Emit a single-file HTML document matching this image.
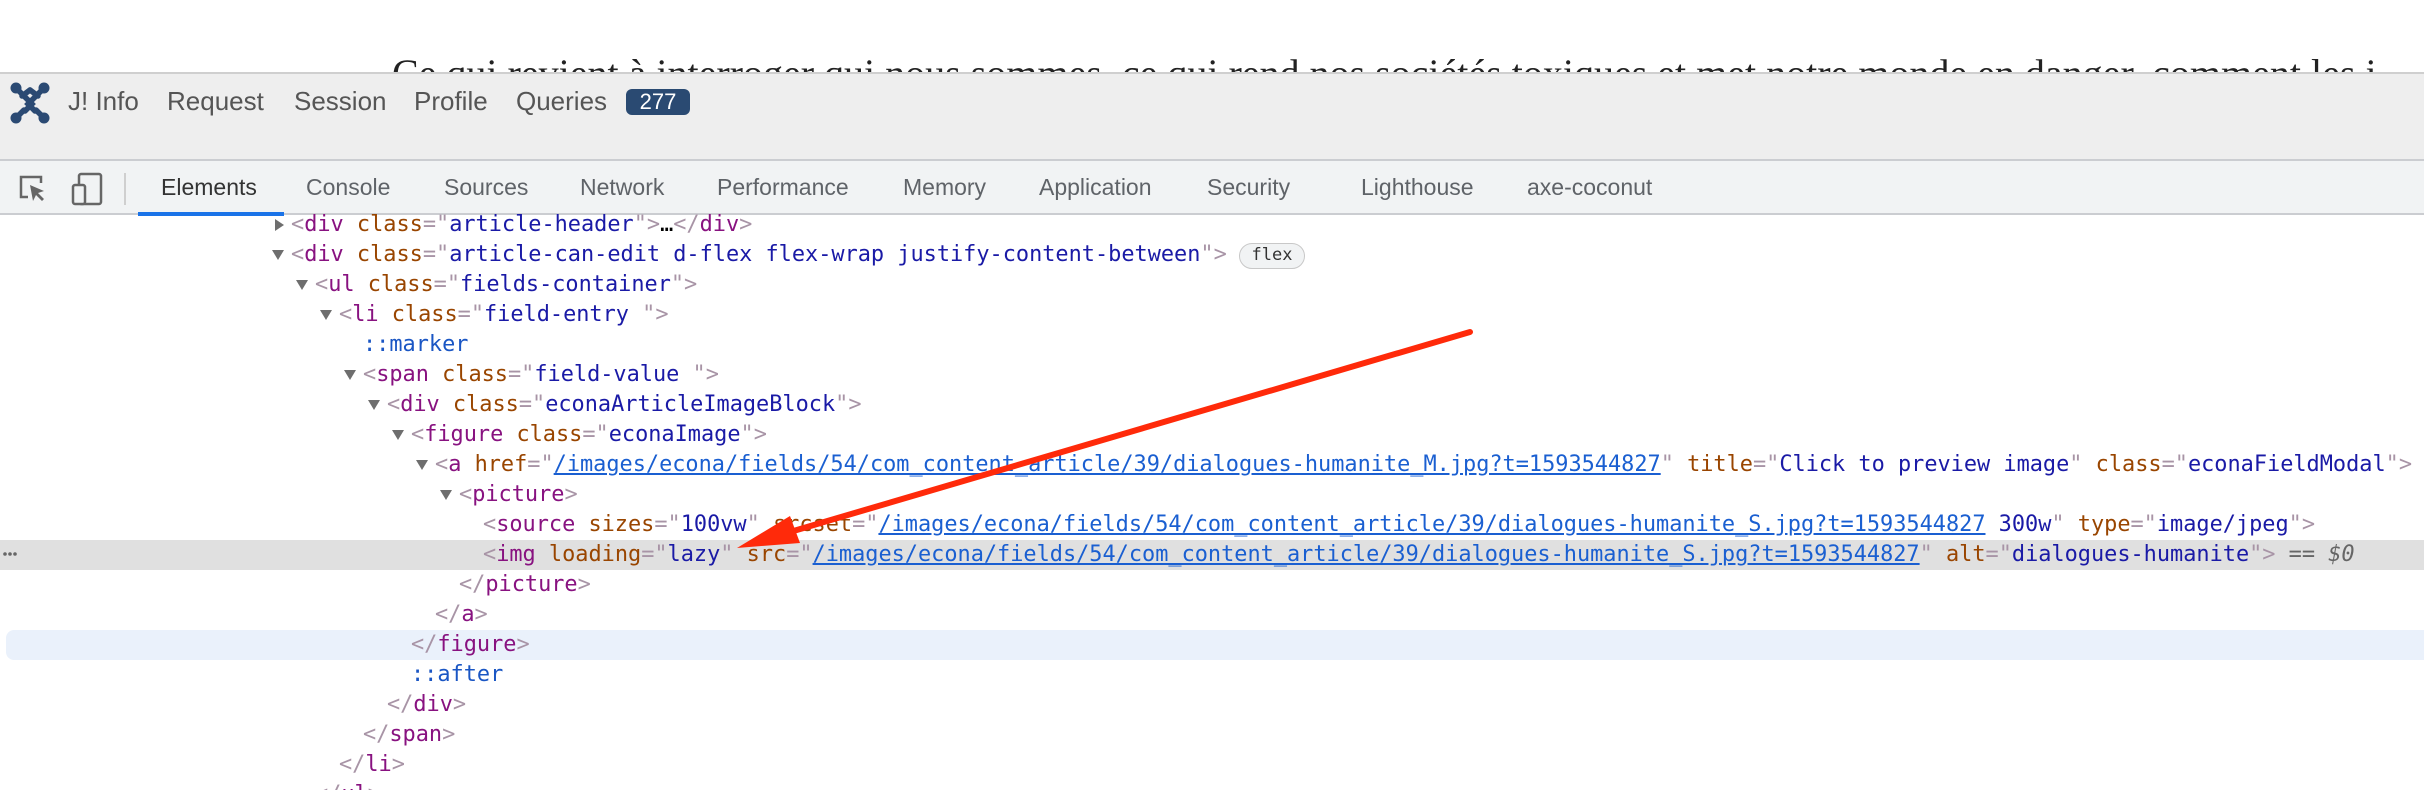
<!DOCTYPE html>
<html><head><meta charset="utf-8">
<style>
*{margin:0;padding:0;box-sizing:border-box}
html,body{width:2424px;height:790px;overflow:hidden;background:#fff;position:relative}
.top{position:absolute;left:0;top:0;width:2424px;height:73px;overflow:hidden;background:#fff}
.top .txt{position:absolute;left:392px;top:54px;font-family:"Liberation Serif",serif;font-size:40px;line-height:40px;color:#222;white-space:nowrap}
.jbar{position:absolute;left:0;top:72px;width:2424px;height:89px;background:#eeeeee;border-top:2px solid #cfcfcf;border-bottom:2px solid #cbcdd1}
.jbar span.i{position:absolute;top:12px;font-family:"Liberation Sans",sans-serif;font-size:26px;color:#555}
.badge{position:absolute;left:626px;top:15px;width:64px;height:26px;background:#2a4a72;border-radius:6px;color:#fff;font-family:"Liberation Sans",sans-serif;font-size:22px;text-align:center;line-height:26px}
.tb{position:absolute;left:0;top:161px;width:2424px;height:54px;background:#f1f3f4;border-bottom:2px solid #cbcdd1}
.tb span.t{position:absolute;top:13px;font-family:"Liberation Sans",sans-serif;font-size:23px;color:#5f6368}
.ul{position:absolute;left:138px;top:51px;width:146px;height:4px;background:#1a73e8}
.r{position:absolute;left:0;height:30px;line-height:30px;font-family:"DejaVu Sans Mono",monospace;font-size:21.9px;white-space:pre}
.t{color:#881280}.p{color:#a894a6}.a{color:#994500}.v{color:#1a1aa6}.l{color:#1a5fd1;text-decoration:underline}.ps{color:#1a56c4}
.tri{position:absolute;width:0;height:0}
.dn{border-left:6px solid transparent;border-right:6px solid transparent;border-top:10px solid #6e6e6e}
.rt{border-top:6px solid transparent;border-bottom:6px solid transparent;border-left:9px solid #6e6e6e}
</style></head><body>
<div class="top"><div class="txt">Ce qui revient à interroger qui nous sommes, ce qui rend nos sociétés toxiques et met notre monde en danger, comment les i</div></div>
<div class="jbar">
<svg style="position:absolute;left:10px;top:8px" width="40" height="42" viewBox="0 0 40 42">
<g stroke="#2b4a73" stroke-width="5.5" fill="none" stroke-linecap="round">
<path d="M7 7 L22 22 L15 29"/><path d="M33 7 L18 22 L25 29"/><path d="M7 35 L14 28"/><path d="M33 35 L26 28"/><path d="M12 14 L20 8"/><path d="M28 14 L20 8"/></g>
<g fill="#2b4a73"><circle cx="6" cy="6" r="5.5"/><circle cx="34" cy="6" r="5.5"/><circle cx="6" cy="36" r="5.5"/><circle cx="34" cy="36" r="5.5"/></g>
</svg>
<span class="i" style="left:68px">J! Info</span>
<span class="i" style="left:167px">Request</span>
<span class="i" style="left:294px">Session</span>
<span class="i" style="left:414px">Profile</span>
<span class="i" style="left:516px">Queries</span>
<div class="badge">277</div>
</div>
<div class="tb">
<svg style="position:absolute;left:18px;top:13px" width="30" height="30" viewBox="0 0 30 30">
<path d="M10 23 H3 V3 H23 V9" stroke="#666" stroke-width="2.5" fill="none"/>
<path d="M12 11 L26 17 L20 19 L26 25 L24 27 L18 21 L15 27 Z" fill="#666"/></svg>
<svg style="position:absolute;left:71px;top:11px" width="32" height="34" viewBox="0 0 32 34">
<rect x="8" y="2" width="22" height="30" rx="2" stroke="#666" stroke-width="2.5" fill="none"/>
<rect x="2" y="13" width="12" height="19" rx="2" stroke="#666" stroke-width="2.5" fill="#f1f3f4"/></svg>
<div style="position:absolute;left:124px;top:12px;width:2px;height:32px;background:#cfcfcf"></div>
<span class="t" style="left:161px;color:#333">Elements</span>
<span class="t" style="left:306px">Console</span>
<span class="t" style="left:444px">Sources</span>
<span class="t" style="left:580px">Network</span>
<span class="t" style="left:717px">Performance</span>
<span class="t" style="left:903px">Memory</span>
<span class="t" style="left:1039px">Application</span>
<span class="t" style="left:1207px">Security</span>
<span class="t" style="left:1361px">Lighthouse</span>
<span class="t" style="left:1527px">axe-coconut</span>
<div class="ul"></div>
</div>
<div style="position:absolute;left:0;top:540px;width:2424px;height:30px;background:#e0e0e0"></div>
<div style="position:absolute;left:6px;top:630px;width:2418px;height:30px;background:#eaf1fb;border-radius:8px 0 0 8px"></div>
<svg style="position:absolute;left:3px;top:551px" width="14" height="6"><circle cx="2" cy="3" r="1.8" fill="#666"/><circle cx="7" cy="3" r="1.8" fill="#666"/><circle cx="12" cy="3" r="1.8" fill="#666"/></svg>

<div class="tri rt" style="left:275px;top:219px"></div>
<div class="r" style="left:291px;top:210px"><span class="p">&lt;</span><span class="t">div</span> <span class="a">class</span><span class="p">="</span><span class="v">article-header</span><span class="p">"&gt;</span>…<span class="p">&lt;/</span><span class="t">div</span><span class="p">&gt;</span></div>

<div class="tri dn" style="left:272px;top:250px"></div>
<div class="r" style="left:291px;top:240px"><span class="p">&lt;</span><span class="t">div</span> <span class="a">class</span><span class="p">="</span><span class="v">article-can-edit d-flex flex-wrap justify-content-between</span><span class="p">"&gt;</span></div>
<div style="position:absolute;left:1239px;top:243px;width:66px;height:26px;border:1.5px solid #c8c8c8;border-radius:13px;background:#f1f3f4;font-family:'DejaVu Sans Mono',monospace;font-size:17px;color:#333;text-align:center;line-height:23px">flex</div>

<div class="tri dn" style="left:296px;top:280px"></div>
<div class="r" style="left:315px;top:270px"><span class="p">&lt;</span><span class="t">ul</span> <span class="a">class</span><span class="p">="</span><span class="v">fields-container</span><span class="p">"&gt;</span></div>

<div class="tri dn" style="left:320px;top:310px"></div>
<div class="r" style="left:339px;top:300px"><span class="p">&lt;</span><span class="t">li</span> <span class="a">class</span><span class="p">="</span><span class="v">field-entry </span><span class="p">"&gt;</span></div>

<div class="r" style="left:363px;top:330px"><span class="ps">::marker</span></div>

<div class="tri dn" style="left:344px;top:370px"></div>
<div class="r" style="left:363px;top:360px"><span class="p">&lt;</span><span class="t">span</span> <span class="a">class</span><span class="p">="</span><span class="v">field-value </span><span class="p">"&gt;</span></div>

<div class="tri dn" style="left:368px;top:400px"></div>
<div class="r" style="left:387px;top:390px"><span class="p">&lt;</span><span class="t">div</span> <span class="a">class</span><span class="p">="</span><span class="v">econaArticleImageBlock</span><span class="p">"&gt;</span></div>

<div class="tri dn" style="left:392px;top:430px"></div>
<div class="r" style="left:411px;top:420px"><span class="p">&lt;</span><span class="t">figure</span> <span class="a">class</span><span class="p">="</span><span class="v">econaImage</span><span class="p">"&gt;</span></div>

<div class="tri dn" style="left:416px;top:460px"></div>
<div class="r" style="left:435px;top:450px"><span class="p">&lt;</span><span class="t">a</span> <span class="a">href</span><span class="p">="</span><span class="l">/images/econa/fields/54/com_content_article/39/dialogues-humanite_M.jpg?t=1593544827</span><span class="p">"</span> <span class="a">title</span><span class="p">="</span><span class="v">Click to preview image</span><span class="p">"</span> <span class="a">class</span><span class="p">="</span><span class="v">econaFieldModal</span><span class="p">"&gt;</span></div>

<div class="tri dn" style="left:440px;top:490px"></div>
<div class="r" style="left:459px;top:480px"><span class="p">&lt;</span><span class="t">picture</span><span class="p">&gt;</span></div>

<div class="r" style="left:483px;top:510px"><span class="p">&lt;</span><span class="t">source</span> <span class="a">sizes</span><span class="p">="</span><span class="v">100vw</span><span class="p">"</span> <span class="a">srcset</span><span class="p">="</span><span class="l">/images/econa/fields/54/com_content_article/39/dialogues-humanite_S.jpg?t=1593544827</span><span class="v"> 300w</span><span class="p">"</span> <span class="a">type</span><span class="p">="</span><span class="v">image/jpeg</span><span class="p">"&gt;</span></div>

<div class="r" style="left:483px;top:540px"><span class="p">&lt;</span><span class="t">img</span> <span class="a">loading</span><span class="p">="</span><span class="v">lazy</span><span class="p">"</span> <span class="a">src</span><span class="p">="</span><span class="l">/images/econa/fields/54/com_content_article/39/dialogues-humanite_S.jpg?t=1593544827</span><span class="p">"</span> <span class="a">alt</span><span class="p">="</span><span class="v">dialogues-humanite</span><span class="p">"&gt;</span><span style="color:#666"> == <i>$0</i></span></div>

<div class="r" style="left:459px;top:570px"><span class="p">&lt;/</span><span class="t">picture</span><span class="p">&gt;</span></div>
<div class="r" style="left:435px;top:600px"><span class="p">&lt;/</span><span class="t">a</span><span class="p">&gt;</span></div>
<div class="r" style="left:411px;top:630px"><span class="p">&lt;/</span><span class="t">figure</span><span class="p">&gt;</span></div>
<div class="r" style="left:411px;top:660px"><span class="ps">::after</span></div>
<div class="r" style="left:387px;top:690px"><span class="p">&lt;/</span><span class="t">div</span><span class="p">&gt;</span></div>
<div class="r" style="left:363px;top:720px"><span class="p">&lt;/</span><span class="t">span</span><span class="p">&gt;</span></div>
<div class="r" style="left:339px;top:750px"><span class="p">&lt;/</span><span class="t">li</span><span class="p">&gt;</span></div>
<div class="r" style="left:315px;top:780px"><span class="p">&lt;/</span><span class="t">ul</span><span class="p">&gt;</span></div>

<svg style="position:absolute;left:0;top:0" width="2424" height="790">
<line x1="1470" y1="332" x2="790" y2="532" stroke="#ff2a0a" stroke-width="6" stroke-linecap="round"/>
<polygon points="737,548 790,516 800,543" fill="#ff2a0a"/>
</svg>
</body></html>
